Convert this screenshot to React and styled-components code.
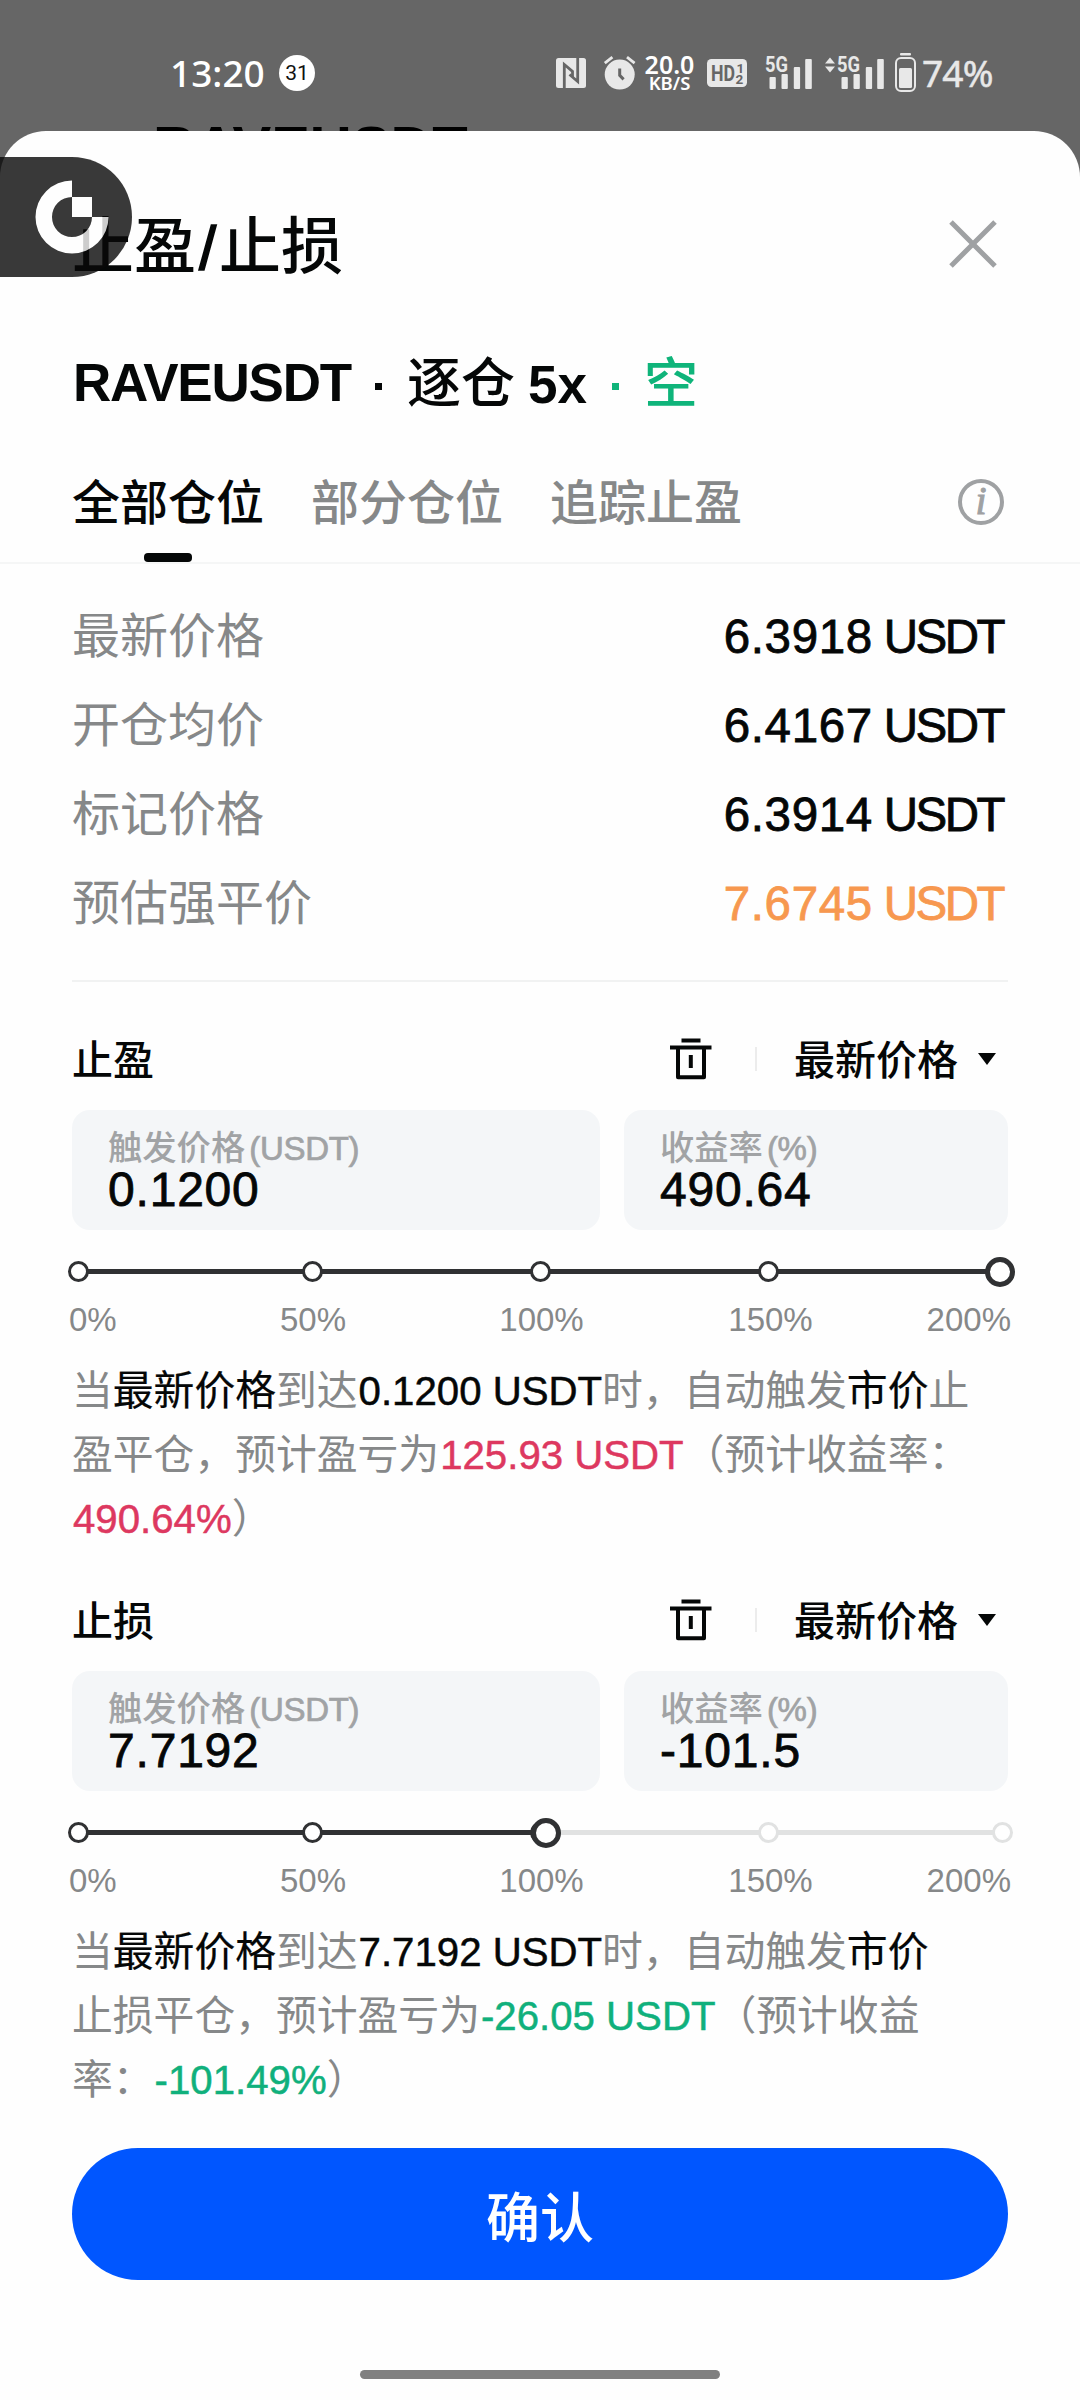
import React from "react";
import styled, { createGlobalStyle } from "styled-components";

const priceRows = [
  { label: "最新价格", value: "6.3918" },
  { label: "开仓均价", value: "6.4167" },
  { label: "标记价格", value: "6.3914" },
  { label: "预估强平价", value: "7.6745", color: "#f7984f" },
];

const tabs = ["全部仓位", "部分仓位", "追踪止盈"];

// stop centers, measured from the left edge of the track
const stops = [6, 240, 468, 696, 930];

function NfcIcon() {
  return (
    <svg width="30" height="30" viewBox="0 0 30 30">
      <rect width="30" height="30" rx="2.5" fill="#e8e8e8" />
      <g fill="none" stroke="#666" strokeWidth="2.8">
        <path d="M8.3 30V6.5L16.5 13.5V19" />
        <path d="M21.7 0V23.5L13.5 16.5" />
      </g>
    </svg>
  );
}

function AlarmIcon() {
  return (
    <svg width="32" height="34" viewBox="0 0 32 34">
      <circle cx="15.7" cy="18.6" r="15" fill="#e8e8e8" />
      <path d="M.8 7.2L8.4 1.2M23 1.2L30.6 7.2" stroke="#e8e8e8" strokeWidth="2.8" />
      <path d="M15.7 12.5V19.3L19.6 23.4" fill="none" stroke="#666" strokeWidth="3" />
    </svg>
  );
}

function HdIcon() {
  return (
    <svg width="40" height="28" viewBox="0 0 40 28">
      <rect width="40" height="28" rx="4.5" fill="#e8e8e8" />
      <g fill="#666" fontFamily="Roboto, sans-serif" fontWeight="700">
        <text x="4" y="21.5" fontSize="21.5" textLength="24" lengthAdjust="spacingAndGlyphs">
          HD
        </text>
        <text x="29.5" y="13.6" fontSize="13.5">1</text>
        <text x="28.5" y="25" fontSize="13.5">2</text>
      </g>
    </svg>
  );
}

function SignalIcon({ arrows }) {
  const x = arrows ? 12 : 0;
  return (
    <svg width={47 + x} height="36" viewBox={`0 -1 ${47 + x} 36`}>
      <g fill="#e8e8e8">
        {arrows && <path d="M0 7.5L5 1.5L10 7.5zM0 10.5L5 16.5L10 10.5z" />}
        <text
          x={x}
          y="16.4"
          fontSize="21.5"
          fontWeight="700"
          fontFamily="Roboto, sans-serif"
          textLength="23"
          lengthAdjust="spacingAndGlyphs"
        >
          5G
        </text>
        <rect x={x + 4.5} y="21" width="6.3" height="12" rx="1" />
        <rect x={x + 16.5} y="18" width="6.3" height="15" rx="1" />
        <rect x={x + 28.8} y="11" width="6.3" height="22" rx="1" />
        <rect x={x + 40.2} y="3" width="6.6" height="30" rx="1" />
      </g>
    </svg>
  );
}

function BatteryIcon() {
  return (
    <svg width="21" height="39" viewBox="0 0 21 39">
      <rect x="5" y="0" width="11" height="2.4" rx="1" fill="#e8e8e8" />
      <rect x="1" y="5" width="19" height="33" rx="5" fill="none" stroke="#e8e8e8" strokeWidth="2" />
      <rect x="4" y="15" width="13" height="20" rx="1.5" fill="#e8e8e8" />
    </svg>
  );
}

function TrashIcon() {
  return (
    <svg width="42" height="42" viewBox="0 0 42 42">
      <g fill="none" stroke="#050707" strokeWidth="4">
        <path d="M11.5 2.5H30.5M0 9.5H41.5" />
        <path d="M8 9.5V39.3H34V9.5" strokeLinejoin="round" />
        <path d="M20.8 17V30" />
      </g>
    </svg>
  );
}

function Logo() {
  return (
    <svg width="74" height="74" viewBox="-37 -37 74 74">
      <path d="M0 -36.5A36.5 36.5 0 1 0 36.5 0H20A20 20 0 1 1 0 -20z" fill="#fff" />
      <rect x="0" y="-20" width="20" height="20" fill="#fff" />
    </svg>
  );
}

function Slider({ thumb, thumbAt, fill }) {
  return (
    <Track>
      <Line />
      <FilledLine $width={fill} />
      {stops.map((left, i) => (
        <Stop key={left} $left={left} $muted={i > thumb} $hidden={i === thumb && i === 4} />
      ))}
      <Thumb $left={thumbAt} />
    </Track>
  );
}

function OrderSection({ title, price, rate, slider, children }) {
  return (
    <Section>
      <SectionHead>
        <h3>{title}</h3>
        <TrashIcon />
        <Separator />
        <Trigger>
          <span>最新价格</span>
          <svg width="18" height="12" viewBox="0 0 18 12">
            <path d="M0 0H18L9 12z" fill="#050707" />
          </svg>
        </Trigger>
      </SectionHead>
      <Fields>
        <Field>
          <label>
            触发价格<span>(USDT)</span>
          </label>
          <strong>{price}</strong>
        </Field>
        <Field>
          <label>
            收益率<span>(%)</span>
          </label>
          <strong>{rate}</strong>
        </Field>
      </Fields>
      <Slider {...slider} />
      <Scale>
        <span>0%</span>
        <span>50%</span>
        <span>100%</span>
        <span>150%</span>
        <span>200%</span>
      </Scale>
      <Hint>{children}</Hint>
    </Section>
  );
}

export default function App() {
  return (
    <Screen>
      <GlobalStyle />
      <Backdrop>
        <StatusBar>
          <Clock>13:20</Clock>
          <DateBadge>31</DateBadge>
          <StatusIcons>
            <NfcIcon />
            <StatusItem $gap={18}>
              <AlarmIcon />
            </StatusItem>
            <NetSpeed>
              <b>20.0</b>
              <small>KB/S</small>
            </NetSpeed>
            <StatusItem $gap={12}>
              <HdIcon />
            </StatusItem>
            <StatusItem $gap={18}>
              <SignalIcon />
            </StatusItem>
            <StatusItem $gap={13}>
              <SignalIcon arrows />
            </StatusItem>
            <StatusItem $gap={11}>
              <BatteryIcon />
            </StatusItem>
            <Percent>74%</Percent>
          </StatusIcons>
        </StatusBar>
        <PageTitle>RAVEUSDT</PageTitle>
      </Backdrop>

      <Sheet>
        <TitleRow>
          <h1>
            止盈<span>/</span>止损
          </h1>
          <svg width="48" height="48" viewBox="0 0 48 48">
            <path d="M2 2L46 46M46 2L2 46" stroke="#9fa1a3" strokeWidth="5" />
          </svg>
        </TitleRow>
        <Pair>
          <Symbol>RAVEUSDT</Symbol>
          <Dot />
          <Side>逐仓</Side>
          <Leverage>5x</Leverage>
          <Dot $green />
          <Side $green>空</Side>
        </Pair>
        <Tabs>
          {tabs.map((tab, i) => (
            <Tab key={tab} $active={i === 0}>
              {tab}
            </Tab>
          ))}
          <InfoIcon>i</InfoIcon>
        </Tabs>

        <Prices>
          {priceRows.map(({ label, value, color }) => (
            <PriceRow key={label} $color={color}>
              <span>{label}</span>
              <Amount>
                {value}
                <Unit>USDT</Unit>
              </Amount>
            </PriceRow>
          ))}
        </Prices>

        <Orders>
          <OrderSection
            title="止盈"
            price="0.1200"
            rate="490.64"
            slider={{ thumb: 4, thumbAt: 928, fill: 928 }}
          >
            当<Em>最新价格</Em>到达<Figure>0.1200 USDT</Figure>时，自动触发<Em>市价</Em>止
            <br />
            盈平仓，预计盈亏为<Figure $color="#dd3860">125.93 USDT</Figure>（预计收益率：
            <br />
            <Figure $color="#dd3860">490.64%</Figure>）
          </OrderSection>
          <OrderSection
            title="止损"
            price="7.7192"
            rate="-101.5"
            slider={{ thumb: 2, thumbAt: 474, fill: 474 }}
          >
            当<Em>最新价格</Em>到达<Figure>7.7192 USDT</Figure>时，自动触发<Em>市价</Em>
            <br />
            止损平仓，预计盈亏为<Figure $color="#10b07c">-26.05 USDT</Figure>（预计收益
            <br />
            率：<Figure $color="#10b07c">-101.49%</Figure>）
          </OrderSection>
        </Orders>

        <Confirm>确认</Confirm>
        <HomeBar />
      </Sheet>

      <FloatingBadge>
        <Logo />
      </FloatingBadge>
    </Screen>
  );
}

const GlobalStyle = createGlobalStyle`
  * {
    box-sizing: border-box;
    margin: 0;
    padding: 0;
  }
  body {
    background: #666;
    font-family: "Liberation Sans", "Noto Sans CJK SC", sans-serif;
    color: #050707;
  }
  svg {
    display: block;
    flex-shrink: 0;
    overflow: visible;
  }
`;

const Screen = styled.div`
  position: relative;
  width: 1080px;
  height: 2400px;
  overflow: hidden;
  background: #666;
`;

const Backdrop = styled.header`
  height: 131px;
  padding-top: 48px;
  overflow: hidden;
`;

const StatusBar = styled.div`
  display: flex;
  align-items: center;
  height: 49px;
  padding-left: 170px;
  font-family: "Noto Sans", sans-serif;
  color: #fff;
`;

const Clock = styled.span`
  width: 109px;
  font-size: 37px;
  line-height: 49px;
  font-weight: 500;
`;

const DateBadge = styled.span`
  width: 36px;
  height: 36px;
  border-radius: 50%;
  background: #fff;
  color: #111;
  font-family: Roboto, sans-serif;
  font-size: 21px;
  line-height: 36px;
  text-align: center;
`;

const StatusIcons = styled.div`
  display: flex;
  align-items: center;
  margin-left: 241px;
`;

const StatusItem = styled.span`
  margin-left: ${({ $gap }) => $gap}px;
`;

const NetSpeed = styled.span`
  display: flex;
  flex-direction: column;
  align-items: center;
  width: 51px;
  margin-left: 8px;
  b {
    font-size: 25px;
    line-height: 20px;
    font-weight: 600;
  }
  small {
    font-size: 18.5px;
    line-height: 17px;
    font-weight: 600;
  }
`;

const Percent = styled.span`
  margin-left: 6px;
  font-size: 37px;
  line-height: 49px;
  letter-spacing: -0.8px;
  color: #e8e8e8;
  -webkit-text-stroke: 0.5px currentColor;
`;

const PageTitle = styled.div`
  margin: 21px 0 0 153px;
  font-size: 58px;
  line-height: 58px;
  font-weight: 700;
  color: #000;
`;

const Sheet = styled.main`
  display: flex;
  flex-direction: column;
  height: 2269px;
  border-radius: 46px 46px 0 0;
  background: #fefefe;
`;

const TitleRow = styled.div`
  display: flex;
  align-items: center;
  justify-content: space-between;
  height: 226px;
  padding: 0 83px 0 72px;
  h1 {
    display: flex;
    padding-top: 8px;
    font-size: 62px;
    line-height: 64px;
    font-weight: 500;
  }
  span {
    width: 23px;
    text-align: center;
    -webkit-text-stroke: 1.6px currentColor;
  }
`;

const Pair = styled.h2`
  display: flex;
  align-items: center;
  height: 52px;
  padding-left: 73px;
  font-size: 53px;
  line-height: 54px;
  font-weight: 500;
`;

const Symbol = styled.span`
  width: 302px;
  font-weight: 700;
  letter-spacing: -1.2px;
`;

const Dot = styled.i`
  width: 7px;
  height: 7px;
  margin: 6px 25px 0 0;
  background: ${({ $green }) => ($green ? "#0fb47a" : "#050707")};
`;

const Leverage = styled.span`
  width: 97px;
  padding: 3px 0 0 13px;
  font-weight: 700;
`;

const Side = styled.span`
  padding-top: 2px;
  font-size: 54px;
  color: ${({ $green }) => ($green ? "#0fb47a" : "inherit")};
`;

const Tabs = styled.nav`
  display: flex;
  gap: 47px;
  height: 155px;
  padding: 71px 76px 0 72px;
  border-bottom: 2px solid #f5f6f6;
`;

const Tab = styled.span`
  display: flex;
  flex-direction: column;
  align-items: center;
  justify-content: space-between;
  font-size: 48px;
  line-height: 48px;
  font-weight: 500;
  color: ${({ $active }) => ($active ? "#050707" : "#868889")};
  &::after {
    content: "";
    width: 48px;
    height: 9px;
    border-radius: 4px;
    background: ${({ $active }) => ($active ? "#050707" : "transparent")};
  }
`;

const InfoIcon = styled.span`
  width: 46px;
  height: 46px;
  margin: -1px 0 0 auto;
  border: 4px solid #9fa1a3;
  border-radius: 50%;
  color: #9fa1a3;
  font-family: "Liberation Serif", serif;
  font-size: 40px;
  font-style: italic;
  line-height: 36px;
  text-align: center;
  -webkit-text-stroke: 1px currentColor;
`;

const Prices = styled.div`
  margin: 0 72px;
  padding: 28px 0 32px;
  border-bottom: 2px solid #f1f2f2;
`;

const PriceRow = styled.div`
  display: flex;
  align-items: center;
  justify-content: space-between;
  height: 89px;
  font-size: 48px;
  line-height: 56px;
  color: ${({ $color }) => $color || "#050707"};
  > span:first-child {
    color: #868889;
  }
`;

const Amount = styled.span`
  padding: 1px 5px 0 0;
  font-size: 47.5px;
  letter-spacing: 0.6px;
  -webkit-text-stroke: 0.8px currentColor;
`;

const Unit = styled.span`
  margin-left: 11px;
  letter-spacing: -2.5px;
`;

const Orders = styled.div`
  display: flex;
  flex-direction: column;
  gap: 38px;
  padding: 45px 72px 0;
`;

const Section = styled.section`
  height: 523px;
`;

const SectionHead = styled.div`
  display: flex;
  align-items: center;
  height: 64px;
  font-size: 41px;
  line-height: 62px;
  font-weight: 500;
  h3 {
    flex: 1;
    padding-top: 3px;
    font-size: inherit;
    font-weight: inherit;
  }
`;

const Separator = styled.i`
  width: 2px;
  height: 24px;
  margin: 0 37px 0 43px;
  background: #ececec;
`;

const Trigger = styled.span`
  display: flex;
  align-items: center;
  gap: 20px;
  padding-right: 12px;
  span {
    padding-top: 3px;
  }
`;

const Fields = styled.div`
  display: grid;
  grid-template-columns: 528px 384px;
  gap: 24px;
  margin-top: 19px;
`;

const Field = styled.div`
  display: flex;
  flex-direction: column;
  height: 120px;
  padding: 21px 36px 0;
  border-radius: 18px;
  background: #f4f6f8;
  label {
    font-size: 34.3px;
    line-height: 34px;
    font-weight: 500;
    color: #a1a3a5;
    span {
      margin-left: 4px;
      font-size: 33px;
      line-height: 1;
      letter-spacing: -0.3px;
      -webkit-text-stroke: 0.7px currentColor;
    }
  }
  strong {
    margin-top: 1px;
    font-size: 48px;
    line-height: 48px;
    font-weight: 400;
    letter-spacing: 0.8px;
    -webkit-text-stroke: 0.8px currentColor;
  }
`;

const Track = styled.div`
  position: relative;
  height: 30px;
  margin-top: 27px;
`;

const Line = styled.i`
  position: absolute;
  top: 12px;
  left: 6px;
  width: 924px;
  height: 5px;
  background: #e1e2e2;
`;

const FilledLine = styled(Line)`
  width: ${({ $width }) => $width - 6}px;
  background: #303133;
`;

const Stop = styled.i`
  position: absolute;
  top: 4px;
  left: ${({ $left }) => $left - 10.5}px;
  width: 21px;
  height: 21px;
  border: 3px solid ${({ $muted }) => ($muted ? "#e1e2e2" : "#303133")};
  border-radius: 50%;
  background: #fff;
  visibility: ${({ $hidden }) => ($hidden ? "hidden" : "visible")};
`;

const Thumb = styled.i`
  position: absolute;
  top: 0;
  left: ${({ $left }) => $left - 15}px;
  width: 30px;
  height: 30px;
  border: 5px solid #303133;
  border-radius: 50%;
  background: #fff;
`;

const Scale = styled.div`
  display: grid;
  grid-template-columns: 130px 228px 229px 229px 126px;
  margin: 15px -3px 0 -3px;
  padding-top: 1px;
  font-size: 33px;
  line-height: 34px;
  color: #868889;
  text-align: center;
  span:first-child {
    text-align: left;
  }
  span:last-child {
    text-align: right;
  }
`;

const Hint = styled.p`
  margin-top: 22px;
  font-size: 40.8px;
  line-height: 64px;
  color: #868889;
  white-space: nowrap;
`;

const Em = styled.span`
  color: #050707;
  -webkit-text-stroke: 0.2px currentColor;
`;

const Figure = styled.span`
  margin-left: 1px;
  font-size: 40.2px;
  line-height: 1;
  color: ${({ $color }) => $color || "#050707"};
  -webkit-text-stroke: 0.5px currentColor;
`;

const Confirm = styled.button`
  height: 132px;
  margin: 37px 72px 0;
  border: none;
  border-radius: 66px;
  background: #0056ff;
  color: #fff;
  font-family: inherit;
  font-size: 54px;
  font-weight: 500;
`;

const HomeBar = styled.div`
  width: 360px;
  height: 9px;
  margin: 90px auto 0;
  border-radius: 5px;
  background: #808080;
`;

const FloatingBadge = styled.div`
  position: absolute;
  top: 157px;
  left: 0;
  display: flex;
  align-items: center;
  width: 132px;
  height: 120px;
  padding-left: 35px;
  border-radius: 0 60px 60px 0;
  background: #090909;
  opacity: 0.8;
`;
